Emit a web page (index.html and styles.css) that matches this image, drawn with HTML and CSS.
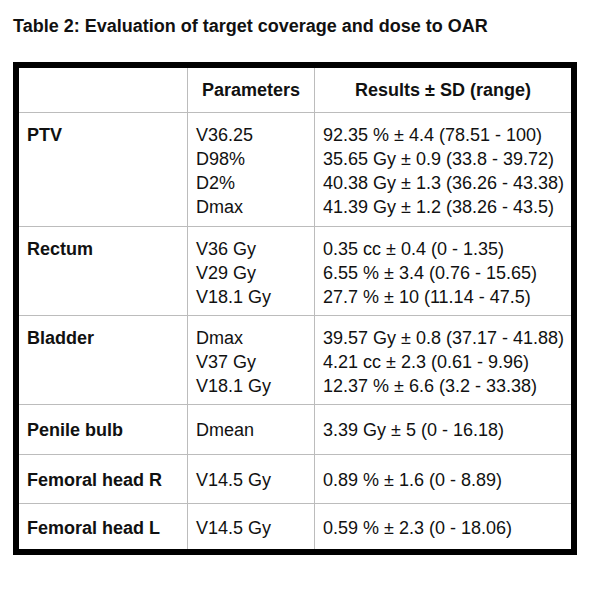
FILE: index.html
```html
<!DOCTYPE html>
<html lang="en">
<head>
<meta charset="utf-8">
<title>Table 2</title>
<link rel="stylesheet" href="styles.css">
</head>
<body>
<div class="page">
  <h1 class="title">Table 2: Evaluation of target coverage and dose to OAR</h1>
  <div class="table">
    <div class="row head">
      <div class="cell"></div>
      <div class="cell center">Parameters</div>
      <div class="cell center">Results ± SD (range)</div>
    </div>
    <div class="row four">
      <div class="cell name">PTV</div>
      <div class="cell">V36.25<br>D98%<br>D2%<br>Dmax</div>
      <div class="cell">92.35 % ± 4.4 (78.51 - 100)<br>35.65 Gy ± 0.9 (33.8 - 39.72)<br>40.38 Gy ± 1.3 (36.26 - 43.38)<br>41.39 Gy ± 1.2 (38.26 - 43.5)</div>
    </div>
    <div class="row three">
      <div class="cell name">Rectum</div>
      <div class="cell">V36 Gy<br>V29 Gy<br>V18.1 Gy</div>
      <div class="cell">0.35 cc ± 0.4 (0 - 1.35)<br>6.55 % ± 3.4 (0.76 - 15.65)<br>27.7 % ± 10 (11.14 - 47.5)</div>
    </div>
    <div class="row three">
      <div class="cell name">Bladder</div>
      <div class="cell">Dmax<br>V37 Gy<br>V18.1 Gy</div>
      <div class="cell">39.57 Gy ± 0.8 (37.17 - 41.88)<br>4.21 cc ± 2.3 (0.61 - 9.96)<br>12.37 % ± 6.6 (3.2 - 33.38)</div>
    </div>
    <div class="row one">
      <div class="cell name">Penile bulb</div>
      <div class="cell">Dmean</div>
      <div class="cell">3.39 Gy ± 5 (0 - 16.18)</div>
    </div>
    <div class="row one">
      <div class="cell name">Femoral head R</div>
      <div class="cell">V14.5 Gy</div>
      <div class="cell">0.89 % ± 1.6 (0 - 8.89)</div>
    </div>
    <div class="row one last">
      <div class="cell name">Femoral head L</div>
      <div class="cell">V14.5 Gy</div>
      <div class="cell">0.59 % ± 2.3 (0 - 18.06)</div>
    </div>
  </div>
</div>
</body>
</html>
```

FILE: styles.css
```css
html, body {
  margin: 0;
  padding: 0;
  background: #ffffff;
}

body {
  font-family: "Liberation Sans", Arial, Helvetica, sans-serif;
  color: #111111;
  font-size: 18px;
  line-height: 24px;
}

.page {
  padding: 14px 0 0 13px;
}

.title {
  margin: 0 0 24px 0;
  font-size: 18px;
  line-height: 24px;
  font-weight: bold;
  color: #111111;
}

.table {
  box-sizing: border-box;
  width: 564px;
  border: 6px solid #000000;
}

.row {
  display: grid;
  grid-template-columns: 168px 127px 257px;
  border-top: 1px solid #bcbcbc;
}

.row.head {
  border-top: 0;
  font-weight: bold;
}

.cell {
  padding-left: 8px;
  padding-right: 6px;
  white-space: nowrap;
}

.cell + .cell {
  border-left: 1px solid #bcbcbc;
}

.cell.center {
  text-align: center;
  padding-left: 0;
  padding-right: 0;
}

.cell.name {
  font-weight: bold;
}

.head .cell {
  padding-top: 10px;
  padding-bottom: 10px;
}

.four .cell {
  padding-top: 10px;
  padding-bottom: 7px;
}

.three .cell {
  padding-top: 10px;
  padding-bottom: 6px;
}

.one .cell {
  padding-top: 13px;
  padding-bottom: 11px;
}

.one:nth-child(5) .cell {
  padding-bottom: 12px;
}

.one.last .cell {
  padding-top: 12px;
  padding-bottom: 9px;
}
```
